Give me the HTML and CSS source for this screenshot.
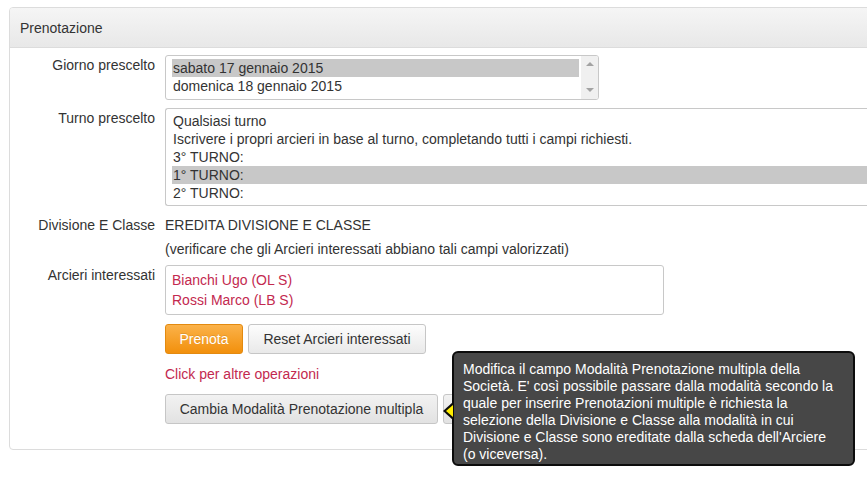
FILE: index.html
```html
<!DOCTYPE html>
<html lang="it">
<head>
<meta charset="utf-8">
<title>Prenotazione</title>
<link rel="stylesheet" href="styles.css">
</head>
<body>
<div class="panel">
  <div class="panel-heading">Prenotazione</div>
  <div class="panel-body">
    <div class="row row-giorno">
      <div class="label">Giorno prescelto</div>
      <div class="control">
        <div class="listbox listbox-giorno">
          <div class="options">
            <div class="opt selected">sabato 17 gennaio 2015</div>
            <div class="opt">domenica 18 gennaio 2015</div>
          </div>
          <div class="scrollbar">
            <span class="arrow-up"></span>
            <span class="arrow-down"></span>
          </div>
        </div>
      </div>
    </div>
    <div class="row row-turno">
      <div class="label">Turno prescelto</div>
      <div class="control">
        <div class="listbox listbox-turno">
          <div class="options">
            <div class="opt">Qualsiasi turno</div>
            <div class="opt">Iscrivere i propri arcieri in base al turno, completando tutti i campi richiesti.</div>
            <div class="opt">3° TURNO:</div>
            <div class="opt selected">1° TURNO:</div>
            <div class="opt">2° TURNO:</div>
          </div>
        </div>
      </div>
    </div>
    <div class="row row-divisione">
      <div class="label">Divisione E Classe</div>
      <div class="control">
        <div class="text-line">EREDITA DIVISIONE E CLASSE</div>
        <div class="text-line note">(verificare che gli Arcieri interessati abbiano tali campi valorizzati)</div>
      </div>
    </div>
    <div class="row row-arcieri">
      <div class="label">Arcieri interessati</div>
      <div class="control">
        <div class="arcieri-box">
          <div class="arciere">Bianchi Ugo (OL S)</div>
          <div class="arciere">Rossi Marco (LB S)</div>
        </div>
        <div class="buttons">
          <button class="btn btn-warning">Prenota</button>
          <button class="btn btn-default">Reset Arcieri interessati</button>
        </div>
        <div class="more-link">Click per altre operazioni</div>
        <div class="buttons buttons-more">
          <button class="btn btn-gray">Cambia Modalità Prenotazione multipla</button>
          <button class="btn btn-gray btn-hidden" aria-label="Altre operazioni"></button>
        </div>
      </div>
    </div>
  </div>
</div>
<div class="tooltip">
  <span class="tip-arrow"></span>
  Modifica il campo Modalità Prenotazione multipla della Società. E' così possibile passare dalla modalità secondo la quale per inserire Prenotazioni multiple è richiesta la selezione della Divisione e Classe alla modalità in cui Divisione e Classe sono ereditate dalla scheda dell'Arciere (o viceversa).
</div>
</body>
</html>
```

FILE: styles.css
```css
html, body {
  margin: 0;
  padding: 0;
  overflow: hidden;
  background: #fff;
}
body {
  font-family: "Liberation Sans", Arial, sans-serif;
  font-size: 14px;
  color: #333;
  width: 867px;
  height: 477px;
  position: relative;
}
.panel {
  margin: 7px -40px 0 9px;
  border: 1px solid #dcdcdc;
  border-radius: 4px;
  height: 443px;
  box-sizing: border-box;
}
.panel-heading {
  height: 40px;
  box-sizing: border-box;
  padding: 11px 10px 0 10px;
  line-height: 18px;
  background: linear-gradient(to bottom, #f5f5f5 0%, #e8e8e8 100%);
  border-bottom: 1px solid #dcdcdc;
  border-radius: 3px 3px 0 0;
}
.panel-body {
  padding-top: 7px;
}
.row {
  display: flex;
  gap: 10px;
}
.label {
  width: 145px;
  text-align: right;
  flex: none;
  line-height: 20px;
}
.control {
  flex: 1;
  min-width: 0;
}
.row-turno { margin-top: 8px; }
.listbox {
  border: 1px solid #c8c8c8;
  border-radius: 3px;
  box-sizing: border-box;
  display: flex;
  background: #fff;
}
.listbox-giorno {
  width: 434px;
  height: 45px;
}
.listbox-turno {
  height: 98px;
  border-right: none;
  border-radius: 3px 0 0 3px;
}
.options {
  flex: 1;
  padding: 3px 2px 0 6px;
}
.listbox-turno .options {
  padding: 3px 0 0 6px;
}
.opt {
  height: 18px;
  line-height: 18px;
  padding-left: 1px;
  white-space: nowrap;
}
.opt.selected {
  background: #c8c8c8;
}
.scrollbar {
  width: 17px;
  background: #f0f0f0;
  position: relative;
  border-radius: 0 2px 2px 0;
}
.arrow-up, .arrow-down {
  position: absolute;
  left: 5px;
  width: 0;
  height: 0;
  border-left: 4px solid transparent;
  border-right: 4px solid transparent;
}
.arrow-up {
  top: 6px;
  border-bottom: 4px solid #a3a3a3;
}
.arrow-down {
  bottom: 7px;
  border-top: 4px solid #a3a3a3;
}
.row-divisione { margin-top: 9px; }
.text-line {
  line-height: 20px;
}
.text-line.note {
  margin-top: 4px;
}
.row-arcieri { margin-top: 6px; }
.arcieri-box {
  width: 499px;
  height: 50px;
  box-sizing: border-box;
  border: 1px solid #c8c8c8;
  border-radius: 3px;
  padding: 4px 6px 0 6px;
}
.arciere {
  color: #c3294f;
  line-height: 20px;
}
.buttons {
  display: flex;
  gap: 5px;
  margin-top: 9px;
}
.btn {
  font-family: "Liberation Sans", Arial, sans-serif;
  font-size: 14px;
  height: 30px;
  box-sizing: border-box;
  padding: 0 14px;
  border-radius: 3px;
  cursor: pointer;
  line-height: 28px;
  white-space: nowrap;
  flex: none;
}
.btn-warning {
  width: 78px;
  padding: 0;
  color: #fff;
  background: linear-gradient(to bottom, #fbb24a 0%, #f2900c 100%);
  border: 1px solid #e38a10;
  text-shadow: 0 -1px 0 rgba(0,0,0,0.1);
}
.btn-default {
  width: 178px;
  padding: 0;
  color: #333;
  background: linear-gradient(to bottom, #fdfdfd 0%, #e9e9e9 100%);
  border: 1px solid #c6c6c6;
}
.btn-gray {
  color: #333;
  background: linear-gradient(to bottom, #f2f2f2 0%, #e2e2e2 100%);
  border: 1px solid #c6c6c6;
}
.buttons-more .btn-gray:first-child {
  width: 273px;
  padding: 0;
}
.btn-hidden {
  width: 60px;
}
.more-link {
  color: #c3294f;
  margin-top: 10px;
  line-height: 20px;
}
.buttons-more {
  margin-top: 10px;
}
.tooltip {
  position: absolute;
  left: 452px;
  top: 351px;
  width: 403px;
  height: 115px;
  box-sizing: border-box;
  background: #474747;
  border: 2px solid #0c0c0c;
  border-radius: 6px;
  color: #fff;
  padding: 8px 16px 0 9px;
  line-height: 17px;
  font-size: 14px;
}
.tip-arrow {
  position: absolute;
  left: -11px;
  top: 49px;
  width: 0;
  height: 0;
  border-top: 9px solid transparent;
  border-bottom: 9px solid transparent;
  border-right: 10px solid #0c0c0c;
}
.tip-arrow::after {
  content: "";
  position: absolute;
  left: 3px;
  top: -6px;
  width: 0;
  height: 0;
  border-top: 6px solid transparent;
  border-bottom: 6px solid transparent;
  border-right: 7px solid #ffee00;
}
```
